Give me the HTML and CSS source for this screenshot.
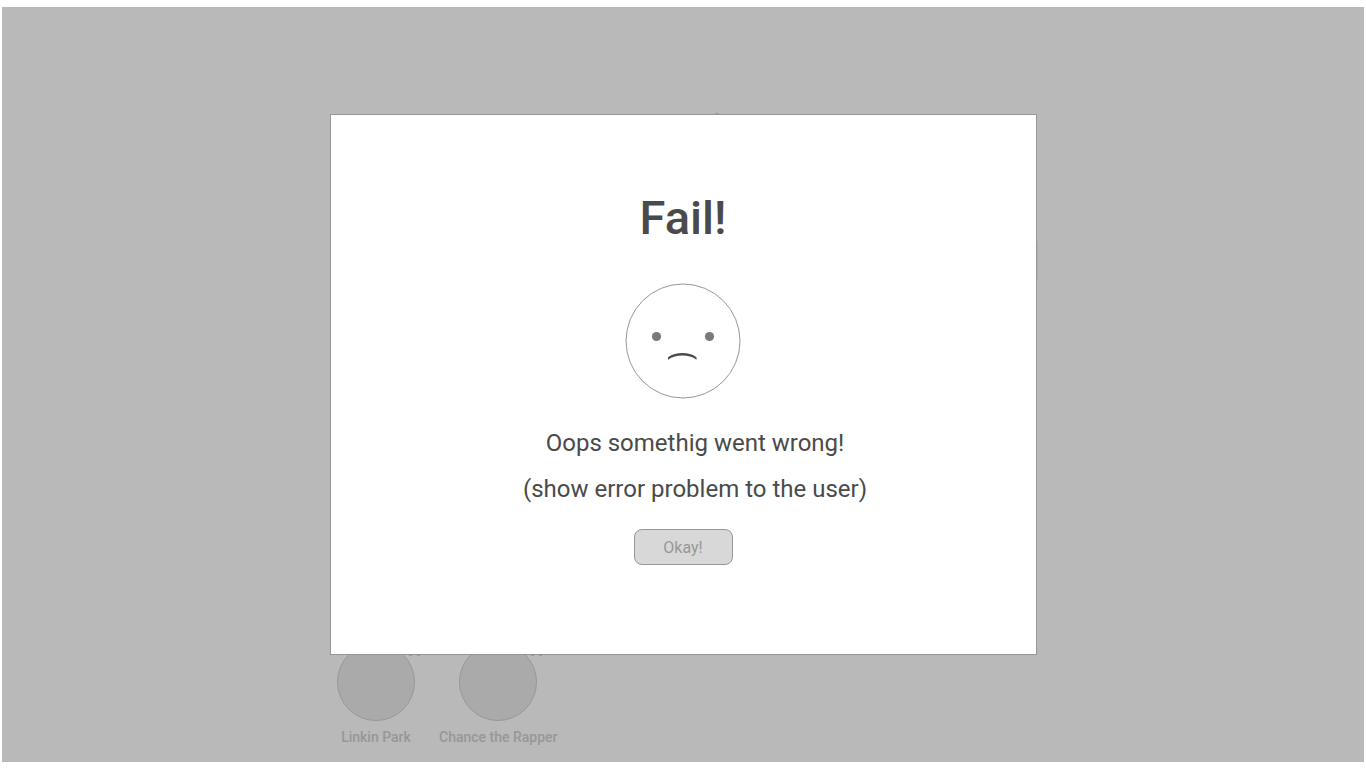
FILE: index.html
```html
<!DOCTYPE html>
<html lang="en">
<head>
<meta charset="utf-8">
<title>Fail!</title>
<link rel="stylesheet" href="styles.css">
</head>
<body>
<main class="page">
  <div class="content">
    <svg class="mark" viewBox="0 0 4 2" aria-hidden="true"><ellipse cx="2" cy="1" rx="2" ry="1"/></svg>
    <div class="field"></div>
    <ul class="artists">
      <li class="artist">
        <span class="avatar"><svg class="tag" viewBox="0 0 11 12" aria-hidden="true"><path d="M1.500 0V12M9.500 0V12"/></svg></span>
        <span>Linkin Park</span>
      </li>
      <li class="artist">
        <span class="avatar"><svg class="tag" viewBox="0 0 11 12" aria-hidden="true"><path d="M1.500 0V12M9.500 0V12"/></svg></span>
        <span>Chance the Rapper</span>
      </li>
    </ul>
  </div>
</main>
<div class="overlay">
  <section class="dialog" role="alertdialog" aria-modal="true" aria-labelledby="title" aria-describedby="message">
    <h1 class="title" id="title">Fail!</h1>
    <svg class="face" viewBox="0 0 116 116" aria-hidden="true">
      <circle class="outline" cx="58" cy="58" r="57"/>
      <circle class="eye" cx="31.500" cy="53.500" r="4.600"/>
      <circle class="eye" cx="84.500" cy="53.500" r="4.600"/>
      <path class="mouth" d="M43 74.300C51 68.700 64 68.700 71.500 74.300L71.500 76.700C64 71.200 51 71.200 43 76.700Z"/>
    </svg>
    <div class="message" id="message">
      <p>Oops somethig went wrong!</p>
      <p>(show error problem to the user)</p>
    </div>
    <button class="okay" type="button">Okay!</button>
  </section>
</div>
</body>
</html>
```
FILE: styles.css
```css
* {
  box-sizing: border-box;
}

body {
  margin: 0;
  background: #fff;
  color: #4a4a4a;
  font-family: Roboto, "Liberation Sans", sans-serif;
}

.page {
  display: flex;
  justify-content: center;
  min-height: 100vh;
  padding: 105px 16px 17px;
  border: solid #fff;
  border-width: 7px 2px 6px;
  background: #b9b9b9;
}

.content {
  display: flex;
  flex-direction: column;
  width: 100%;
  max-width: 710px;
}

.mark {
  align-self: center;
  width: 4px;
  height: 4px;
  margin-left: 68px;
  fill: #979797;
}

.field {
  height: 48px;
  margin: 121px 0 0 4px;
  border: 1px solid #b0b0b0;
  border-radius: 8px;
}

.artists {
  display: flex;
  gap: 18px;
  margin: auto 0 0;
  padding: 0 0 0 3px;
  list-style: none;
}

.artist {
  display: flex;
  flex-direction: column;
  align-items: center;
  gap: 8px;
  min-width: 90px;
  color: #979797;
  font-size: 14px;
  font-weight: 500;
  line-height: 16px;
}

.avatar {
  position: relative;
  width: 78px;
  height: 78px;
  border: 1px solid #979797;
  border-radius: 50%;
  background: #aaa;
}

.tag {
  position: absolute;
  top: 0;
  right: -6px;
  width: 11px;
  height: 12px;
  stroke: #979797;
  stroke-width: 3;
}

.overlay {
  position: fixed;
  inset: 0;
  display: grid;
  place-items: center;
}

.dialog {
  display: flex;
  flex-direction: column;
  align-items: center;
  width: 52%;
  min-width: 400px;
  max-width: 707px;
  padding: 74px 24px 89px;
  border: 1px solid #979797;
  background: #fff;
}

.title {
  margin: 0;
  font-size: 47px;
  font-weight: 500;
  line-height: 58px;
}

.face {
  width: 116px;
  height: 116px;
  margin-top: 36px;
}

.outline {
  fill: none;
  stroke: #979797;
}

.eye {
  fill: #7a7a7a;
}

.mouth {
  fill: #4a4a4a;
}

.message {
  margin-top: 21px;
  padding-left: 24px;
  font-size: 24px;
  line-height: 46px;
  text-align: center;
}

.message p {
  margin: 0;
}

.okay {
  width: 99px;
  height: 36px;
  margin-top: 17px;
  padding: 2px 0 0;
  border: 1px solid #979797;
  border-radius: 8px;
  background: #d8d8d8;
  color: #979797;
  font: 16px/20px Roboto, "Liberation Sans", sans-serif;
}
```
